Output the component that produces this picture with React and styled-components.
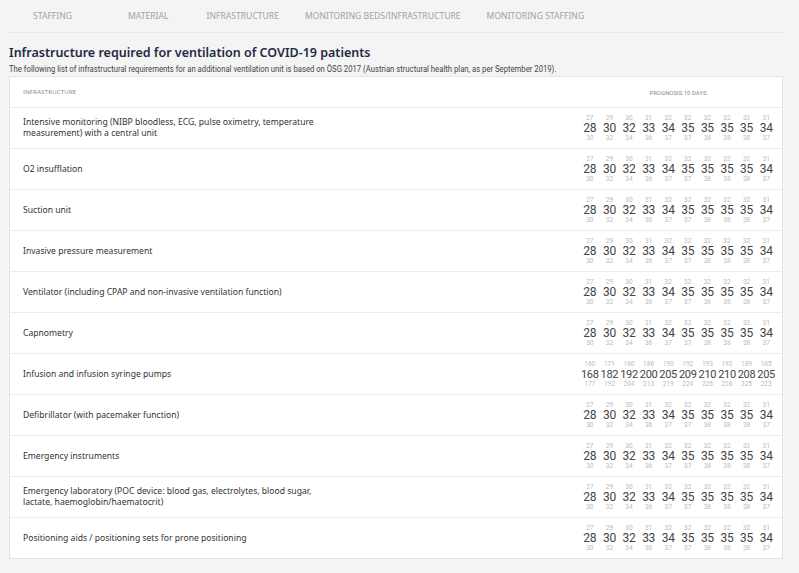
import React from 'react';
import styled, { createGlobalStyle } from 'styled-components';

const Global = createGlobalStyle`
  body { margin: 0; background: #f4f4f4; font-family: "Noto Sans", sans-serif; }
`;

const Page = styled.div`
  width: 799px;
  height: 573px;
  overflow: hidden;
  padding: 0 16px 0 9px;
  box-sizing: border-box;
`;

const Tabs = styled.div`
  display: flex;
  height: 32px;
  border-bottom: 1px solid #e6e6e6;
  padding-left: 11px;
`;

const Tab = styled.div`
  padding: 0 13px;
  margin-right: ${p => p.gap || 0}px;
  display: flex;
  align-items: center;
  font-size: 8.6px;
  color: ${p => (p.active ? '#4b6584' : '#a2a2a2')};
  font-weight: ${p => (p.active ? 600 : 400)};
  border-bottom: 2px solid ${p => (p.active ? '#4b6584' : 'transparent')};
  margin-bottom: -1px;
`;

const Title = styled.h1`
  margin: 11px 0 3px;
  font-size: 12.5px;
  font-weight: 600;
  color: #1f2a44;
`;

const Sub = styled.p`
  margin: 0 0 2px;
  font-family: "Roboto", sans-serif;
  font-size: 8.4px;
  color: #444;
  transform: scaleX(0.92);
  transform-origin: left;
`;

const Card = styled.div`
  background: #fff;
  border: 1px solid #e4e4e4;
`;

const Row = styled.div`
  display: flex;
  align-items: center;
  height: ${p => (p.head ? '30px' : '40px')};
  border-top: ${p => (p.head ? 'none' : '1px solid #ececec')};
  padding: 0 6px 0 13px;
`;

const LabelCell = styled.div`
  flex: 1;
`;

const Label = styled.div`
  font-size: 8.6px;
  color: #333;
  line-height: 11px;
  max-width: 310px;
`;

const HeadLabel = styled.div`
  flex: 1;
  font-size: 6px;
  color: #888;
  letter-spacing: 0.2px;
`;

const HeadRight = styled.div`
  width: 196px;
  text-align: center;
  font-family: "Roboto", sans-serif;
  font-size: 6px;
  color: #888;
`;

const Nums = styled.div`
  display: grid;
  grid-template-columns: repeat(10, 19.6px);
  width: 196px;
`;

const Col = styled.div`
  display: flex;
  flex-direction: column;
  align-items: center;
  font-family: "Roboto", sans-serif;
`;

const Small = styled.span`
  font-size: 6.5px;
  color: #bbb;
  line-height: 7px;
`;

const Big = styled.span`
  font-size: ${p => (p.wide ? '11px' : '12px')};
  color: #444;
  line-height: 13px;
  letter-spacing: -0.3px;
  white-space: nowrap;
`;

const std = {
  lo: [27, 29, 30, 31, 32, 32, 32, 32, 32, 31],
  mid: [28, 30, 32, 33, 34, 35, 35, 35, 35, 34],
  hi: [30, 32, 34, 36, 37, 37, 38, 38, 38, 37],
};
const pumps = {
  lo: [160, 171, 180, 186, 190, 192, 193, 192, 189, 185],
  mid: [168, 182, 192, 200, 205, 209, 210, 210, 208, 205],
  hi: [177, 192, 204, 213, 219, 224, 226, 226, 225, 223],
};

const rows = [
  ['Intensive monitoring (NIBP bloodless, ECG, pulse oximetry, temperature measurement) with a central unit', std],
  ['O2 insufflation', std],
  ['Suction unit', std],
  ['Invasive pressure measurement', std],
  ['Ventilator (including CPAP and non-invasive ventilation function)', std],
  ['Capnometry', std],
  ['Infusion and infusion syringe pumps', pumps],
  ['Defibrillator (with pacemaker function)', std],
  ['Emergency instruments', std],
  ['Emergency laboratory (POC device: blood gas, electrolytes, blood sugar, lactate, haemoglobin/haematocrit)', std],
  ['Positioning aids / positioning sets for prone positioning', std],
];

export default function App() {
  return (
    <Page>
      <Global />
      <Tabs>
        <Tab gap={30}>STAFFING</Tab>
        <Tab gap={12}>MATERIAL</Tab>
        <Tab>INFRASTRUCTURE</Tab>
        <Tab>MONITORING BEDS/INFRASTRUCTURE</Tab>
        <Tab>MONITORING STAFFING</Tab>
      </Tabs>
      <Title>Infrastructure required for ventilation of COVID-19 patients</Title>
      <Sub>The following list of infrastructural requirements for an additional ventilation unit is based on ÖSG 2017 (Austrian structural health plan, as per September 2019).</Sub>
      <Card>
        <Row head>
          <HeadLabel>INFRASTRUCTURE</HeadLabel>
          <HeadRight>PROGNOSIS 10 DAYS</HeadRight>
        </Row>
        {rows.map(([label, d]) => (
          <Row key={label}>
            <LabelCell><Label>{label}</Label></LabelCell>
            <Nums>
              {d.mid.map((v, i) => (
                <Col key={i}>
                  <Small>{d.lo[i]}</Small>
                  <Big wide={v > 99}>{v}</Big>
                  <Small>{d.hi[i]}</Small>
                </Col>
              ))}
            </Nums>
          </Row>
        ))}
      </Card>
    </Page>
  );
}
